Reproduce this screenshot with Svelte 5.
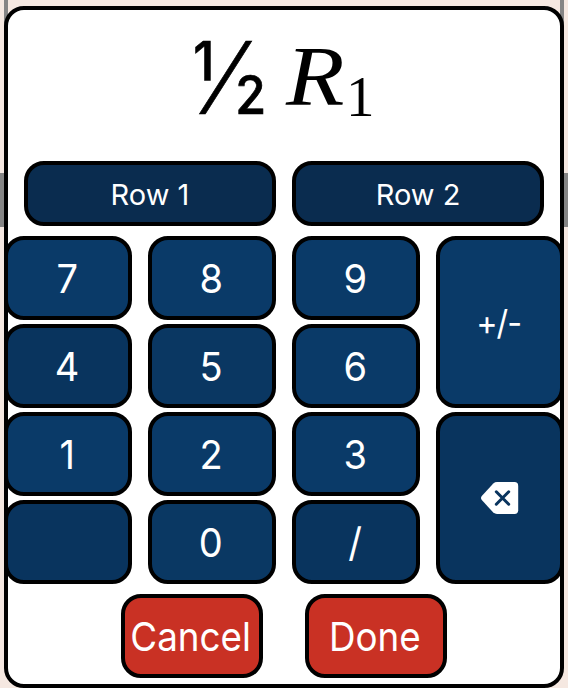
<script>
  const rows = ['Row 1', 'Row 2'];
  const light = '#0a3a68';
  const dark = '#09345e';
  const columns = [
    [['7', light], ['4', dark], ['1', light], ['', dark]],
    [['8', light], ['5', '#0a3762'], ['2', light], ['0', '#0a3863']],
    [['9', light], ['6', light], ['3', light], ['/', dark]]
  ];
</script>

<div class="screen">
  <div class="backdrop"><div class="band"></div></div>
  <div class="panel">
    <div class="display">
      <span class="half">½</span>
      <span class="var">R</span>
      <span class="sub">1</span>
    </div>
    <div class="rows">
      {#each rows as row}
        <button class="row"><span>{row}</span></button>
      {/each}
    </div>
    <div class="pad">
      {#each columns as column}
        <div class="column">
          {#each column as [label, color]}
            <button class="key" style:background={color}><span>{label}</span></button>
          {/each}
        </div>
      {/each}
      <div class="column">
        <button class="key sign"><span>+/-</span></button>
        <button class="key erase" aria-label="Backspace">
          <svg width="38" height="32" viewBox="0 0 38 32">
            <path d="M12.3 1.4Q14 0 16 0H33.5Q37.2 0 37.2 3.7V28.3Q37.2 32 33.5 32H16Q14 32 12.3 30.6L.8 18Q-.8 16 .8 14Z" fill="#fff" />
            <path d="M15.3 9.8L27.7 22.2M27.7 9.8L15.3 22.2" stroke="#09345e" stroke-width="3" stroke-linecap="round" />
          </svg>
        </button>
      </div>
    </div>
    <div class="actions">
      <button class="action cancel"><span>Cancel</span></button>
      <button class="action done"><span>Done</span></button>
    </div>
  </div>
</div>

<style>
  :global(body) { background: #f5e8e1; overflow: hidden; }
  .screen {
    position: relative;
    width: 568px;
    height: 688px;
    padding: 6px 4px 0;
    box-sizing: border-box;
    overflow: hidden;
    font-family: Inter, "Liberation Sans", sans-serif;
  }
  .backdrop {
    position: absolute;
    inset: 0;
    background: linear-gradient(90deg, transparent 4px, #858585 4px 8px, transparent 8px 560px, #858585 560px 564px, transparent 564px) 0 0 / 100% 40px no-repeat;
  }
  .band { margin-top: 173px; height: 54px; background: #858585; }
  .panel {
    position: relative;
    height: 682px;
    box-sizing: border-box;
    border: 4px solid #000;
    border-radius: 20px;
    background: #fff;
  }
  .display {
    display: flex;
    height: 151px;
    color: #000;
    white-space: nowrap;
  }
  .half {
    width: 74px;
    margin-left: 184px;
    font-size: 100px;
    font-weight: 300;
    line-height: 136px;
    -webkit-text-stroke: .7px #000;
    transform: scaleX(.93);
    transform-origin: 0 0;
  }
  .var {
    font: italic 84px/134px "Liberation Serif", serif;
    width: 60px;
    margin-left: 20px;
    transform: scaleX(1.14);
    transform-origin: 0 0;
  }
  .sub { font: 57px/173px "Liberation Serif", serif; }
  button {
    display: flex;
    align-items: center;
    justify-content: center;
    box-sizing: border-box;
    margin: 0;
    padding: 0;
    border: 4px solid #000;
    border-radius: 20px;
    color: #fff;
    font-family: inherit;
    font-weight: 400;
    white-space: nowrap;
  }
  .rows { display: flex; gap: 16px; padding: 0 16px; }
  .row { width: 252px; height: 65px; background: #0a2c4f; font-size: 29px; }
  .row span { position: relative; top: 1px; }
  .pad { display: flex; gap: 16px; margin: 10px -4px 0; }
  .column { display: flex; flex-direction: column; gap: 4px; width: 128px; }
  .key { height: 84px; font-size: 40px; }
  .key span { position: relative; left: -1px; transform: scaleX(.95); }
  .sign { height: 172px; background: #0a3a68; font-size: 34px; letter-spacing: -1px; }
  .erase { height: 172px; background: #09345e; }
  .actions { display: flex; justify-content: center; gap: 42px; margin-top: 10px; }
  .action { width: 142px; height: 84px; background: #c93124; font-size: 40px; }
  .action span { position: relative; left: -1px; transform: scaleX(.92); }
</style>
